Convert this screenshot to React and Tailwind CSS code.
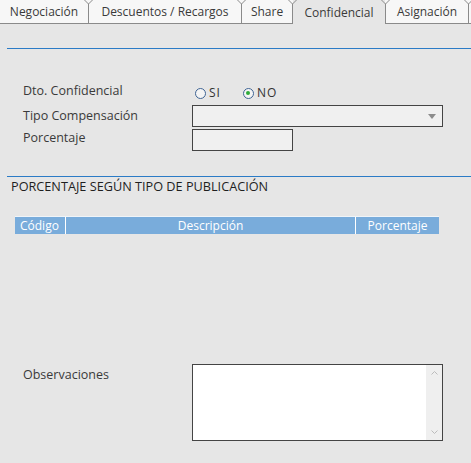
import React from "react";

function Sep() {
  return (
    <div className="relative w-px self-stretch flex flex-col items-center">
      <svg width="9" height="5" viewBox="0 0 9 5" className="absolute top-0 left-[-4px]">
        <path d="M0.5 0 L4.5 4 L8.5 0" fill="none" stroke="#8a8a8a" strokeWidth="1" />
      </svg>
      <div className="mt-[4px] flex-1 w-px bg-[#8a8a8a]" />
    </div>
  );
}

function Tab({ label, active, width }) {
  return (
    <div
      className={
        "h-full flex items-center justify-center " +
        (active ? "bg-[#e6e6e6]" : "bg-[#f7f7f7] border-b border-[#8a8a8a]")
      }
      style={{ width }}
    >
      <span className="mt-[1px]">{label}</span>
    </div>
  );
}

function Radio({ checked, label }) {
  return (
    <div className="flex items-center gap-[3px]">
      <div className="w-[11px] h-[11px] rounded-full border border-[#3f6494] bg-[#f4f4f4] flex items-center justify-center">
        {checked && <div className="w-[4px] h-[4px] rounded-full bg-[#2faa3a]" />}
      </div>
      <span className="text-[12px] tracking-[1px] text-[#333]">{label}</span>
    </div>
  );
}

export default function App() {
  return (
    <div className="w-[471px] h-[463px] bg-[#e6e6e6] font-['Open_Sans',sans-serif] text-[12px] text-[#3a3a3a] overflow-hidden">
      {/* Tabs */}
      <div className="flex h-[24px] bg-[#f7f7f7] items-stretch">
        <Tab label="Negociación" width="88px" />
        <Sep />
        <Tab label="Descuentos / Recargos" width="152px" />
        <Sep />
        <Tab label="Share" width="50px" />
        <Sep />
        <Tab label="Confidencial" width="92px" active />
        <Sep />
        <Tab label="Asignación" width="82px" />
        <Sep />
        <div className="flex-1 border-b border-[#8a8a8a]" />
      </div>

      {/* blue line */}
      <div className="mt-[24px] ml-[7px] h-px bg-[#2b7bc6]" />

      {/* form rows */}
      <div className="mt-[32px] pl-[23px] flex flex-col gap-[2px] text-[12.5px]">
        <div className="flex h-[22px] items-center">
          <div className="w-[169px] -mt-[2px]">Dto. Confidencial</div>
          <div className="flex items-center gap-[22px] ml-[3px] mt-[2px]">
            <Radio label="SI" />
            <Radio label="NO" checked />
          </div>
        </div>
        <div className="flex h-[22px] items-center">
          <div className="w-[169px]">Tipo Compensación</div>
          <div className="w-[251px] h-[22px] border border-[#444] bg-[#f0f0f0] flex items-center justify-end pr-[6px]">
            <svg width="8" height="5" viewBox="0 0 8 5">
              <path d="M0 0 H8 L4 5 Z" fill="#8c8c8c" />
            </svg>
          </div>
        </div>
        <div className="flex h-[22px] items-center">
          <div className="w-[169px] -mt-[4px]">Porcentaje</div>
          <div className="w-[101px] h-[22px] border border-[#444] bg-[#f0f0f0]" />
        </div>
      </div>

      {/* second blue line */}
      <div className="mt-[25px] ml-[7px] h-px bg-[#2b7bc6]" />

      <div className="mt-[2px] pl-[11px] h-[16px] flex items-center text-[12.7px] text-[#1f1f1f]">
        PORCENTAJE SEGÚN TIPO DE PUBLICACIÓN
      </div>

      {/* table header */}
      <div className="mt-[21px] ml-[15px] w-[424px] h-[18px] flex bg-[#79acdb] text-white text-[12px] border-t border-[#f0f4f8]">
        <div className="w-[51px] flex items-center pl-[5px] border-r border-white">Código</div>
        <div className="w-[290px] flex items-center justify-center border-r border-white">Descripción</div>
        <div className="flex-1 flex items-center justify-center">Porcentaje</div>
      </div>

      {/* observaciones */}
      <div className="mt-[130px] pl-[23px] flex text-[12.5px]">
        <div className="w-[169px] pt-[2px]">Observaciones</div>
        <div className="w-[251px] h-[77px] border border-[#444] bg-white flex justify-end">
          <div className="w-[16px] h-full bg-[#efefef] flex flex-col items-center justify-between py-[6px]">
            <svg width="7" height="4" viewBox="0 0 7 4">
              <path d="M0.5 3.5 L3.5 0.5 L6.5 3.5" fill="none" stroke="#bcbcbc" strokeWidth="1" />
            </svg>
            <svg width="7" height="4" viewBox="0 0 7 4">
              <path d="M0.5 0.5 L3.5 3.5 L6.5 0.5" fill="none" stroke="#bcbcbc" strokeWidth="1" />
            </svg>
          </div>
        </div>
      </div>
    </div>
  );
}
